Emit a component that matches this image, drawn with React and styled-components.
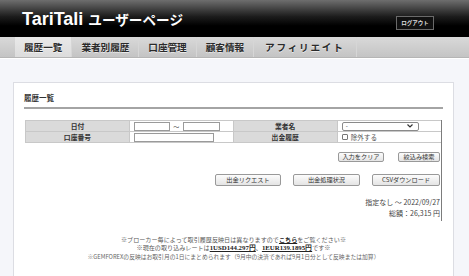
import React from 'react'
import styled, { createGlobalStyle } from 'styled-components'

const GlobalStyle = createGlobalStyle`
  body {
    margin: 0;
    background: #f5f6fa;
    font-family: "Noto Sans CJK JP", "Noto Sans", sans-serif;
    color: #333;
  }
`

const navItems = ['履歴一覧', '業者別履歴', '口座管理', '顧客情報', 'アフィリエイト']

const App = () => {
  return (
    <>
      <GlobalStyle />
      <Header>
        <Title>
          TariTali <Kana>ユーザーページ</Kana>
        </Title>
        <LogoutButton>ログアウト</LogoutButton>
      </Header>
      <Nav>
        {navItems.map((item, i) => (
          <NavItem key={item} active={i === 0} wide={i === 4}>{item}</NavItem>
        ))}
      </Nav>
      <Panel>
        <PanelTitle>履歴一覧</PanelTitle>
        <Section>
          <SearchTable>
            <tbody>
              <tr>
                <LabelCell>日付</LabelCell>
                <ValueCell>
                  <Inline>
                    <TextInput width={36} />
                    <Tilde>〜</Tilde>
                    <TextInput width={37} />
                  </Inline>
                </ValueCell>
                <LabelCell>業者名</LabelCell>
                <ValueCell last>
                  <FakeSelect>
                    <span>-</span>
                    <svg width="6" height="4" viewBox="0 0 6 4">
                      <path d="M0.5 0.5 L3 3 L5.5 0.5" fill="none" stroke="#333" strokeWidth="1.2" />
                    </svg>
                  </FakeSelect>
                </ValueCell>
              </tr>
              <tr>
                <LabelCell>口座番号</LabelCell>
                <ValueCell>
                  <TextInput width={80} />
                </ValueCell>
                <LabelCell>出金履歴</LabelCell>
                <ValueCell last>
                  <Inline>
                    <CheckBox />
                    <CheckText>除外する</CheckText>
                  </Inline>
                </ValueCell>
              </tr>
            </tbody>
          </SearchTable>

          <ButtonRow gap={14} top={9}>
            <Button width={46} height={10}>入力をクリア</Button>
            <Button width={42} height={10}>絞込み検索</Button>
          </ButtonRow>
          <ButtonRow gap={12} top={12}>
            <Button width={66} height={12}>出金リクエスト</Button>
            <Button width={67} height={12}>出金処理状況</Button>
            <Button width={68} height={12}>CSVダウンロード</Button>
          </ButtonRow>

          <Summary>
            <div>指定なし 〜 2022/09/27</div>
            <div>総額：26,315 円</div>
          </Summary>
        </Section>

        <Notes>
          <NoteLine>
            ※ブローカー毎によって取引履歴反映日は異なりますので<StrongLink>こちら</StrongLink>をご覧ください※
          </NoteLine>
          <NoteLine>
            ※現在の取り込みレートは<Rate>1USD144.297円</Rate>、<Rate>1EUR139.1895円</Rate>です※
          </NoteLine>
          <NoteLine small>
            ※GEMFOREXの反映はお取引月の1日にまとめられます（9月中の決済であれば9月1日分として反映または加算）
          </NoteLine>
        </Notes>
      </Panel>
    </>
  )
}

export default App

const Header = styled.header`
  height: 37px;
  display: flex;
  align-items: center;
  justify-content: space-between;
  padding: 0 35px 0 22px;
  background: linear-gradient(#6e6e6e 0%, #1c1c1c 45%, #000 70%, #000 100%);
`
const Title = styled.h1`
  margin: 0;
  color: #fff;
  font-family: "Liberation Sans", Arial, sans-serif;
  font-weight: bold;
  font-size: 18px;
  line-height: 1;
`
const Kana = styled.span`
  font-family: "Noto Sans CJK JP", sans-serif;
  font-size: 13.6px;
`
const LogoutButton = styled.div`
  margin-top: 9px;
  width: 38px;
  height: 14px;
  box-sizing: border-box;
  border: 1px solid #6a6a6a;
  background: #111;
  color: #ddd;
  font-size: 5.5px;
  font-weight: bold;
  display: flex;
  align-items: center;
  justify-content: center;
`
const Nav = styled.nav`
  height: 20px;
  display: flex;
  padding-left: 15px;
  background: linear-gradient(#d9d9d9, #c4c4c4);
  border-bottom: 1px solid #b5b5b5;
  box-shadow: 0 1px 0 #fff;
`
const NavItem = styled.div`
  padding: 0 ${props => (props.wide ? '11px' : '9px')};
  display: flex;
  align-items: center;
  font-size: 9.6px;
  font-weight: bold;
  letter-spacing: ${props => (props.wide ? '1.8px' : '0')};
  color: #2a2a2a;
  background: ${props => (props.active ? 'linear-gradient(#e9e9e9, #dcdcdc)' : 'transparent')};
  border-right: 1px solid #d6d6d6;
  text-shadow: 0 1px 0 rgba(255, 255, 255, 0.6);
`
const Panel = styled.main`
  margin: 24px 15px 0 13px;
  padding: 11px 10px 16px 10px;
  background: #fff;
  border: 1px solid #dcdde3;
  border-bottom: none;
`
const PanelTitle = styled.h2`
  margin: 0;
  font-size: 7.5px;
  font-weight: bold;
  color: #333;
  padding-bottom: 5px;
  border-bottom: 2px solid #a4a4a4;
  line-height: 8px;
`
const Section = styled.section`
  margin: 11px 1px 0 1px;
  border-right: 1px solid #7c7c7c;
  padding-bottom: 2px;
`
const SearchTable = styled.table`
  width: 100%;
  border-collapse: collapse;
  table-layout: fixed;
`
const LabelCell = styled.td`
  height: 10px;
  padding: 0;
  background: #dadada;
  border: 1px solid #c8c8c8;
  text-align: center;
  font-size: 6.8px;
  font-weight: bold;
  color: #333;
  line-height: 10px;
`
const ValueCell = styled.td`
  height: 10px;
  padding: 0 0 0 4px;
  border: 1px solid #c8c8c8;
  border-right: ${props => (props.last ? 'none' : '1px solid #c8c8c8')};
  background: #fff;
`
const Inline = styled.div`
  display: flex;
  align-items: center;
`
const TextInput = styled.div`
  width: ${props => props.width}px;
  height: 9px;
  box-sizing: border-box;
  border: 1px solid #9a9a9a;
  background: #fff;
`
const Tilde = styled.span`
  font-size: 6px;
  color: #555;
  width: 13px;
  text-align: center;
  line-height: 9px;
`
const FakeSelect = styled.div`
  width: 77px;
  height: 9px;
  box-sizing: border-box;
  border: 1px solid #8a8a8a;
  border-radius: 2px;
  display: flex;
  align-items: center;
  justify-content: space-between;
  padding: 0 5px 0 3px;
  font-size: 6px;
  color: #333;
  line-height: 1;
`
const CheckBox = styled.span`
  width: 6px;
  height: 6px;
  box-sizing: border-box;
  border: 1px solid #777;
  border-radius: 1px;
  margin-right: 3px;
`
const CheckText = styled.span`
  font-size: 6.6px;
  color: #555;
  line-height: 9px;
`
const ButtonRow = styled.div`
  display: flex;
  justify-content: flex-end;
  gap: ${props => props.gap}px;
  margin-top: ${props => props.top}px;
  padding-right: 1px;
`
const Button = styled.button`
  width: ${props => props.width}px;
  height: ${props => props.height}px;
  padding: 0;
  box-sizing: border-box;
  border: 1px solid #999;
  border-radius: 2px;
  background: linear-gradient(#fcfcfc, #e4e4e4);
  font-family: "Noto Sans CJK JP", sans-serif;
  font-size: 6.2px;
  color: #333;
  line-height: 1;
`
const Summary = styled.div`
  margin-top: 11px;
  padding-right: 1px;
  text-align: right;
  font-size: 7px;
  line-height: 11px;
  color: #444;
`
const Notes = styled.div`
  margin-top: 15px;
  text-align: center;
`
const NoteLine = styled.div`
  font-size: ${props => (props.small ? '5.8px' : '6.1px')};
  line-height: ${props => (props.small ? '9px' : '8px')};
  color: ${props => (props.small ? '#666' : '#5a5a5a')};
`
const StrongLink = styled.span`
  font-weight: bold;
  color: #222;
  text-decoration: underline;
`
const Rate = styled.span`
  font-family: "Liberation Serif", serif;
  font-weight: bold;
  font-size: 6.8px;
  color: #222;
  text-decoration: underline;
`
